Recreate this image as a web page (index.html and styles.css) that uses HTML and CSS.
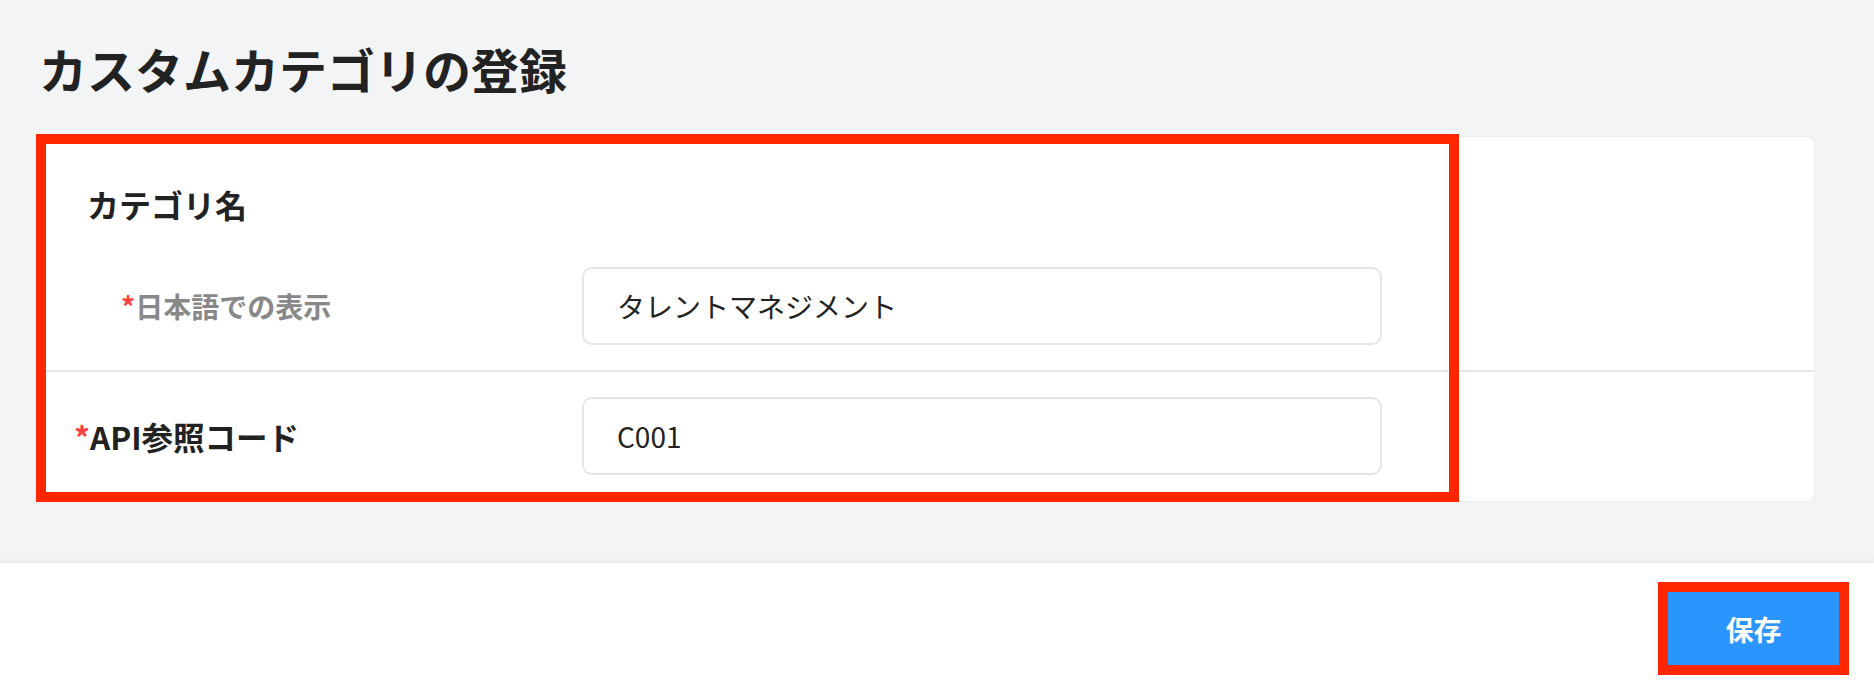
FILE: index.html
```html
<!DOCTYPE html>
<html lang="ja">
<head>
<meta charset="utf-8">
<title>カスタムカテゴリの登録</title>
<link rel="stylesheet" href="styles.css">
</head>
<body>
<div class="page">
  <main class="main">
    <h1 class="title">カスタムカテゴリの登録</h1>
    <section class="card">
      <div class="highlight"></div>
      <div class="group-title">カテゴリ名</div>
      <div class="row row-sub">
        <label class="label label-sub"><span class="req">*</span>日本語での表示</label>
        <div class="input">タレントマネジメント</div>
      </div>
      <div class="row row-last">
        <label class="label"><span class="req">*</span>API参照コード</label>
        <div class="input">C001</div>
      </div>
    </section>
  </main>
  <footer class="footer">
    <button class="save">保存</button>
  </footer>
</div>
</body>
</html>
```
FILE: styles.css
```css
* { box-sizing: border-box; }
html, body {
  margin: 0;
  padding: 0;
  height: 100%;
}
body {
  font-family: "Noto Sans CJK JP", "Noto Sans", sans-serif;
  color: #222;
  background: #fff;
}
.page {
  height: 100vh;
  display: flex;
  flex-direction: column;
}
.main {
  flex: 1;
  background: #f3f4f6;
  padding: 44px 60px 0 39px;
}
.title {
  margin: 0 0 45px 0;
  font-size: 48px;
  line-height: 48px;
  font-weight: 700;
  color: #222;
}
.card {
  position: relative;
  margin-left: 1px;
  background: #fff;
  border-radius: 8px;
  box-shadow: 0 0 0 1px #eceef1;
  height: 364px;
}
.highlight {
  position: absolute;
  left: -4px;
  top: -3px;
  width: 1423px;
  height: 368px;
  border: 10px solid #ff2600;
  pointer-events: none;
  z-index: 2;
}
.group-title {
  padding: 51px 0 22px 47px;
  font-size: 32px;
  line-height: 32px;
  font-weight: 700;
  color: #222;
}
.row {
  display: flex;
  align-items: center;
  padding: 25px 0 25px 34px;
}
.row-sub {
  border-bottom: 2px solid #e4e7eb;
}
.row-last {
  padding-bottom: 24px;
}
.label {
  width: 508px;
  font-size: 31.5px;
  line-height: 40px;
  font-weight: 700;
  color: #222;
}
.label-sub {
  padding-left: 47px;
  font-size: 28px;
  color: #888;
}
.req {
  color: #ff4040;
}
.input {
  width: 800px;
  height: 78px;
  border: 2px solid #e2e6ea;
  border-radius: 10px;
  padding: 0 33px;
  display: flex;
  align-items: center;
  font-size: 28px;
  color: #222;
}
.footer {
  height: 129px;
  background: #fff;
  box-shadow: 0 -2px 4px rgba(0, 0, 0, 0.06);
  display: flex;
  justify-content: flex-end;
  align-items: flex-start;
  padding: 29px 35px 0 0;
  position: relative;
}
.save {
  width: 171px;
  height: 73px;
  border: none;
  background: #2a94ff;
  color: #fff;
  font-family: "Noto Sans CJK JP", "Noto Sans", sans-serif;
  font-size: 28px;
  font-weight: 700;
  outline: 10px solid #ff2600;
  cursor: pointer;
}
```
